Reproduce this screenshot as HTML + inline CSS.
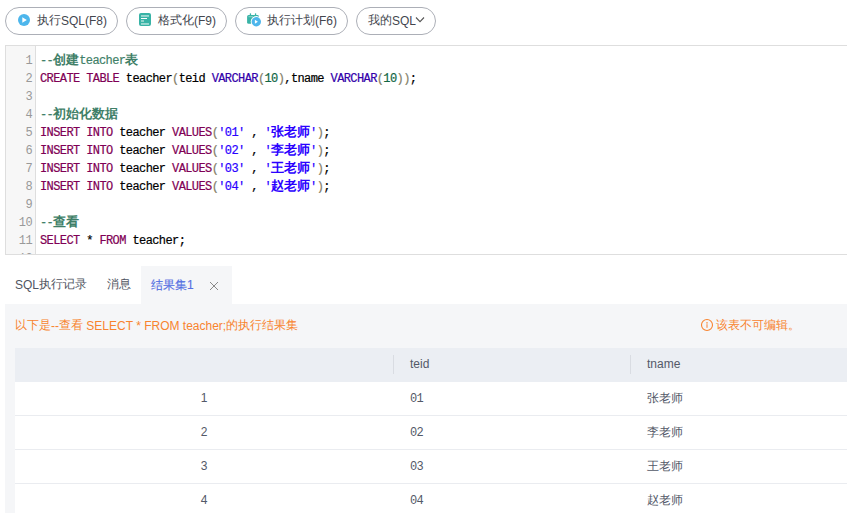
<!DOCTYPE html>
<html><head><meta charset="utf-8">
<style>
html,body{margin:0;padding:0;width:847px;height:513px;overflow:hidden;background:#fff;}
body{position:relative;font-family:"Liberation Sans",sans-serif;font-size:12px;color:#333;}
.abs{position:absolute;}
.btn{position:absolute;top:7px;height:26px;border:1px solid #acafb7;border-radius:14px;box-sizing:content-box;background:#fff;}
.btn .t{position:absolute;top:0;line-height:26px;white-space:nowrap;color:#43464e;font-size:12px;}
.editor{position:absolute;left:5px;top:45px;width:860px;height:208px;border:1px solid #dedede;overflow:hidden;background:#fff;}
.gutter{position:absolute;left:0;top:0;width:29px;height:208px;background:#f7f7f7;border-right:1px solid #dedede;}
.ln{position:absolute;left:0;width:26px;text-align:right;font-family:"Liberation Mono",monospace;font-size:12px;letter-spacing:-0.6px;color:#999;line-height:18px;height:18px;}
.code{position:absolute;left:34px;font-family:"Liberation Mono",monospace;font-size:12px;letter-spacing:-0.6px;-webkit-text-stroke:0.2px currentColor;line-height:18px;height:18px;white-space:pre;color:#000;}
.ln,.code{margin-top:1px;}
.cj{font-size:13px;font-weight:bold;letter-spacing:0;-webkit-text-stroke:0;}
.kw{color:#7f0055;}
.bi{color:#3300aa;}
.nm{color:#116644;}
.br{color:#857f6a;}
.cm{color:#3f7f68;}
.st{color:#2a00ff;}
.tab{position:absolute;top:266px;height:38px;line-height:36px;font-size:12px;color:#4f5461;white-space:nowrap;}
.panel{position:absolute;left:5px;top:304px;width:842px;height:209px;background:#f5f6f8;}
.table{position:absolute;left:10px;top:44px;width:832px;}
.hd{position:absolute;left:0;top:0;width:832px;height:34px;background:#ebeef3;}
.row{position:absolute;left:0;width:832px;height:33px;background:#fff;border-bottom:1px solid #eaecf0;}
.cell{position:absolute;top:0;line-height:33px;font-size:12px;color:#535968;white-space:nowrap;}
.mono{font-family:"Liberation Mono",monospace;font-size:12px;letter-spacing:-0.6px;margin-top:1px;}
.up{position:relative;top:-1px;}
.dn{position:relative;top:1px;}
.sep{position:absolute;top:7px;width:1px;height:19px;background:#d9dce2;}
</style></head><body>

<!-- toolbar -->
<div class="btn" style="left:5px;width:111px;">
  <svg class="abs" style="left:11px;top:5px" width="14" height="14" viewBox="0 0 14 14"><circle cx="7" cy="7" r="6" fill="#4db6ec"/><path d="M5.3 4.2 L9.8 7 L5.3 9.8 Z" fill="#fff"/></svg>
  <span class="t" style="left:31px"><span class="up">执行</span>SQL(F8)</span>
</div>
<div class="btn" style="left:126px;width:99px;">
  <svg class="abs" style="left:12px;top:5px" width="13" height="14" viewBox="0 0 13 14"><rect x="0" y="0" width="12" height="13" rx="2" fill="#38b3a6"/><rect x="2" y="2.1" width="8" height="1.7" fill="#a6dcd5"/><rect x="2" y="5" width="6" height="1" fill="#fff"/><rect x="2" y="7.2" width="3" height="1.6" fill="#a6dcd5"/><rect x="2" y="10.1" width="8" height="1.7" fill="#a6dcd5"/></svg>
  <span class="t" style="left:31px"><span class="up">格式化</span>(F9)</span>
</div>
<div class="btn" style="left:235px;width:111px;">
  <svg class="abs" style="left:11px;top:5px" width="16" height="16" viewBox="0 0 16 16"><rect x="0.1" y="1.9" width="11.9" height="8.9" rx="1.5" fill="#38b3a6"/><rect x="2.8" y="0.2" width="1.3" height="2.5" rx="0.6" fill="#38b3a6"/><rect x="7.9" y="0.2" width="1.3" height="2.5" rx="0.6" fill="#38b3a6"/><rect x="1.5" y="3.2" width="4.5" height="1" fill="#8fd4cc"/><circle cx="9.3" cy="8.7" r="5.6" fill="#fff"/><circle cx="9.3" cy="8.7" r="4.7" fill="#4db6ec"/><path d="M7.9 6.8 L10.9 8.8 L7.9 10.8 Z" fill="#fff"/></svg>
  <span class="t" style="left:31px"><span class="up">执行计划</span>(F6)</span>
</div>
<div class="btn" style="left:356px;width:78px;">
  <span class="t" style="left:11px"><span class="up">我的</span>SQL</span>
  <svg class="abs" style="left:58px;top:8px" width="10" height="8" viewBox="0 0 10 8"><path d="M1 1.5 L5 5.6 L9 1.5" stroke="#555" stroke-width="1.1" fill="none"/></svg>
</div>

<!-- editor -->
<div class="editor">
  <div class="gutter"></div>
  <div class="ln" style="top:5px">1</div>
  <div class="ln" style="top:23px">2</div>
  <div class="ln" style="top:41px">3</div>
  <div class="ln" style="top:59px">4</div>
  <div class="ln" style="top:77px">5</div>
  <div class="ln" style="top:95px">6</div>
  <div class="ln" style="top:113px">7</div>
  <div class="ln" style="top:131px">8</div>
  <div class="ln" style="top:149px">9</div>
  <div class="ln" style="top:167px">10</div>
  <div class="ln" style="top:185px">11</div>
  <div class="ln" style="top:203px">12</div>

  <div class="code" style="top:5px"><span class="cm">--<span class="cj">创建</span>teacher<span class="cj">表</span></span></div>
  <div class="code" style="top:23px"><span class="kw">CREATE</span> <span class="kw">TABLE</span> teacher<span class="br">(</span>teid <span class="bi">VARCHAR</span><span class="br">(</span><span class="nm">10</span><span class="br">)</span>,tname <span class="bi">VARCHAR</span><span class="br">(</span><span class="nm">10</span><span class="br">))</span>;</div>
  <div class="code" style="top:59px"><span class="cm">--<span class="cj">初始化数据</span></span></div>
  <div class="code" style="top:77px"><span class="kw">INSERT</span> <span class="kw">INTO</span> teacher <span class="kw">VALUES</span><span class="br">(</span><span class="st">'01'</span> , <span class="st">'<span class="cj">张老师</span>'</span><span class="br">)</span>;</div>
  <div class="code" style="top:95px"><span class="kw">INSERT</span> <span class="kw">INTO</span> teacher <span class="kw">VALUES</span><span class="br">(</span><span class="st">'02'</span> , <span class="st">'<span class="cj">李老师</span>'</span><span class="br">)</span>;</div>
  <div class="code" style="top:113px"><span class="kw">INSERT</span> <span class="kw">INTO</span> teacher <span class="kw">VALUES</span><span class="br">(</span><span class="st">'03'</span> , <span class="st">'<span class="cj">王老师</span>'</span><span class="br">)</span>;</div>
  <div class="code" style="top:131px"><span class="kw">INSERT</span> <span class="kw">INTO</span> teacher <span class="kw">VALUES</span><span class="br">(</span><span class="st">'04'</span> , <span class="st">'<span class="cj">赵老师</span>'</span><span class="br">)</span>;</div>
  <div class="code" style="top:167px"><span class="cm">--<span class="cj">查看</span></span></div>
  <div class="code" style="top:185px"><span class="kw">SELECT</span> * <span class="kw">FROM</span> teacher;</div>
</div>

<!-- tabs -->
<div class="tab" style="left:15px"><span class="dn">SQL</span>执行记录</div>
<div class="tab" style="left:107px">消息</div>
<div class="abs" style="left:141px;top:266px;width:91px;height:38px;background:#f5f6f8;"></div>
<div class="tab" style="left:151px;top:267px;color:#5470e2;-webkit-text-stroke:0.15px #5470e2">结果集1</div>
<svg class="abs" style="left:209px;top:281px" width="10" height="10" viewBox="0 0 10 10"><path d="M1 1 L9 9 M9 1 L1 9" stroke="#8a8a8a" stroke-width="1"/></svg>

<!-- panel -->
<div class="panel">
  <div class="abs" style="left:10px;top:15px;line-height:14px;color:#f8842f;white-space:nowrap;"><span class="up">以下是</span>--<span class="up">查看</span> SELECT * FROM teacher;<span class="up">的执行结果集</span></div>
  <svg class="abs" style="left:695px;top:14px" width="14" height="14" viewBox="0 0 14 14"><circle cx="7" cy="7" r="5.5" stroke="#f8842f" stroke-width="1.1" fill="none"/><rect x="6.3" y="4.2" width="1.4" height="1.3" fill="#f8842f"/><rect x="6.3" y="6.2" width="1.4" height="3.6" fill="#f9a36a"/></svg>
  <div class="abs" style="left:711px;top:14px;line-height:14px;color:#f8842f;white-space:nowrap;">该表不可编辑。</div>

  <div class="table">
    <div class="hd">
      <div class="sep" style="left:378px"></div>
      <div class="sep" style="left:615px"></div>
      <div class="cell" style="left:395px;line-height:32px">teid</div>
      <div class="cell" style="left:632px;line-height:32px">tname</div>
    </div>
    <div class="row" style="top:34px"><div class="cell" style="left:0;width:378px;text-align:center">1</div><div class="cell mono" style="left:395px">01</div><div class="cell" style="left:632px">张老师</div></div>
    <div class="row" style="top:68px"><div class="cell" style="left:0;width:378px;text-align:center">2</div><div class="cell mono" style="left:395px">02</div><div class="cell" style="left:632px">李老师</div></div>
    <div class="row" style="top:102px"><div class="cell" style="left:0;width:378px;text-align:center">3</div><div class="cell mono" style="left:395px">03</div><div class="cell" style="left:632px">王老师</div></div>
    <div class="row" style="top:136px"><div class="cell" style="left:0;width:378px;text-align:center">4</div><div class="cell mono" style="left:395px">04</div><div class="cell" style="left:632px">赵老师</div></div>
  </div>
</div>
</body></html>
